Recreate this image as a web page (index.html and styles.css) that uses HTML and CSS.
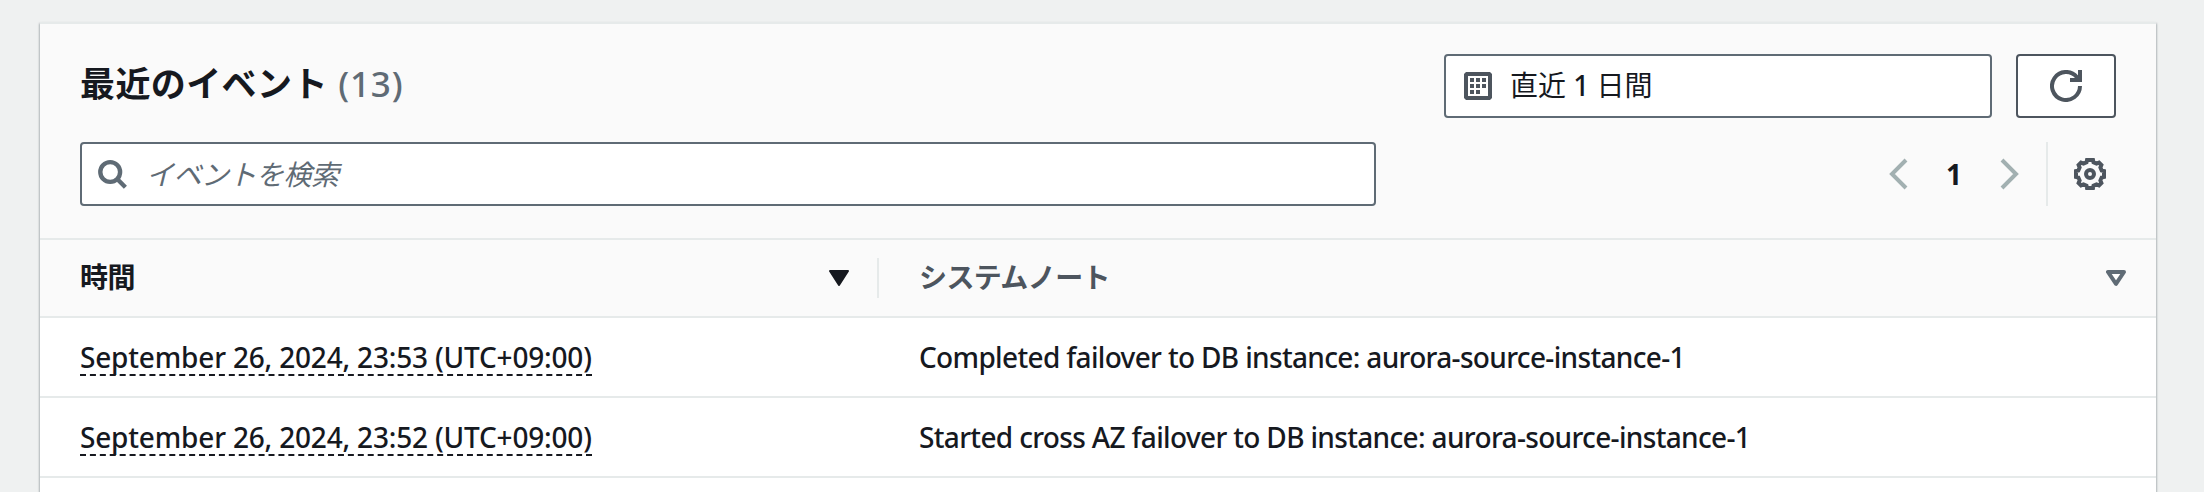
FILE: index.html
```html
<!DOCTYPE html>
<html lang="ja">
<head>
<meta charset="utf-8">
<title>最近のイベント</title>
<link rel="stylesheet" href="styles.css">
</head>
<body>
<main class="card">
  <header class="header">
    <div class="title-row">
      <h2 class="title">最近のイベント <span class="count">(13)</span></h2>
      <div class="range">
        <svg class="calendar" viewBox="0 0 28 28" width="28" height="28"><path fill="#4d555e" fill-rule="evenodd" d="M2 0H26L28 2V26L26 28H2L0 26V2ZM4 4V24H24V4Z"/><path fill="#4d555e" d="M6 6h4v4H6zM12 6h4v4h-4zM18 6h4v4h-4zM6 12h4v4H6zM12 12h4v4h-4zM18 12h4v4h-4zM6 18h4v4H6zM12 18h4v4h-4z"/></svg>
        <span class="range-text">直近 <span class="number">1</span> 日間</span>
      </div>
      <button class="refresh" aria-label="更新"><svg viewBox="0 0 32 32" width="32" height="32" fill="none" stroke="#4d555e" stroke-width="4"><path d="M30 16A14 14 0 1 1 27 7.3L28.6 9.6"/><path d="M30 0V10H20"/></svg></button>
    </div>
    <div class="filter-row">
      <div class="search">
        <svg viewBox="0 0 32 32" width="32" height="32" fill="none" stroke="#5f6b75" stroke-width="4.4"><circle cx="14.2" cy="14" r="9.9"/><path d="M21.2 21L29.4 29.2"/></svg>
        <span class="placeholder">イベントを検索</span>
      </div>
      <nav class="pager">
        <svg class="prev" viewBox="0 0 20 32" width="20" height="32" fill="none" stroke="#a2b0b1" stroke-width="4"><path d="M18 2L4 16L18 30"/></svg>
        <span class="page">1</span>
        <svg class="next" viewBox="0 0 20 32" width="20" height="32" fill="none" stroke="#a2b0b1" stroke-width="4"><path d="M2 2L16 16L2 30"/></svg>
        <span class="rule"></span>
        <svg class="gear" viewBox="0 0 32 32" width="32" height="32" fill="none" stroke="#4d555e" stroke-width="4"><path d="M13 2H19L19.500 4.300L22.500 5.600L25 4.600L27.400 7L26.400 9.500L27.700 12.500L30 13V19L27.700 19.500L26.400 22.500L27.400 25L25 27.400L22.500 26.400L19.500 27.700L19 30H13L12.500 27.700L9.500 26.400L7 27.400L4.600 25L5.600 22.500L4.300 19.500L2 19V13L4.300 12.500L5.600 9.500L4.600 7L7 4.600L9.500 5.600L12.500 4.300Z"/><circle cx="16" cy="16" r="4"/></svg>
      </nav>
    </div>
  </header>
  <div class="row head">
    <div class="cell time"><span class="label">時間</span><svg viewBox="0 0 20 16" width="20" height="16"><path fill="#16191f" stroke="#16191f" stroke-width="2" stroke-linejoin="round" d="M1 1H19L10 15Z"/></svg></div>
    <div class="cell note"><span class="label">システムノート</span><svg viewBox="0 0 20 16" width="20" height="16"><path fill="#fff" stroke="#5f6b75" stroke-width="4" stroke-linejoin="round" d="M2 2H18L10 13.800Z"/></svg></div>
  </div>
  <div class="row">
    <div class="cell"><span class="date">September 26, 2024, 23:53 (UTC+09:00)</span></div>
    <div class="cell note"><span class="message">Completed failover to DB instance: aurora-source-instance-1</span></div>
  </div>
  <div class="row">
    <div class="cell"><span class="date">September 26, 2024, 23:52 (UTC+09:00)</span></div>
    <div class="cell note"><span class="message">Started cross AZ failover to DB instance: aurora-source-instance-1</span></div>
  </div>
</main>
</body>
</html>
```
FILE: styles.css
```css
* { box-sizing: border-box; }
body {
  margin: 0;
  height: 492px;
  padding: 22px 48px 0 40px;
  overflow: hidden;
  background: #eff1f1;
  color: #16191f;
  font-family: "Noto Sans", "Noto Sans CJK JP", sans-serif;
  font-size: 28px;
  line-height: 44px;
}
svg { display: block; flex: none; }
.card {
  height: 470px;
  background: #fff;
  border-top: 2px solid #e6eaea;
  box-shadow: 0 2px 2px rgba(0, 28, 36, .3), 1px 1px 2px rgba(0, 28, 36, .15), -1px 1px 2px rgba(0, 28, 36, .15);
}
.header {
  height: 216px;
  padding: 30px 40px 0;
  background: #fafafa;
  border-bottom: 2px solid #e6eaea;
}
.title-row, .filter-row { display: flex; height: 64px; }
.filter-row { margin-top: 24px; justify-content: space-between; }
.title {
  flex: 1;
  margin: 0;
  font-size: 35px;
  font-weight: 700;
  letter-spacing: .4px;
  line-height: 60px;
  white-space: nowrap;
}
.count {
  margin-left: 1px;
  color: #5f6b75;
  font-weight: 500;
  letter-spacing: .8px;
}
.range, .search {
  display: flex;
  align-items: center;
  background: #fff;
  border: 2px solid #5f6b75;
  border-radius: 4px;
}
.range { width: 548px; padding-left: 18px; }
.range-text { margin: 0 0 2px 18px; white-space: nowrap; }
.number { font-weight: 500; }
.refresh {
  display: flex;
  align-items: center;
  justify-content: center;
  width: 100px;
  margin-left: 24px;
  padding: 0;
  background: #fff;
  border: 2px solid #4d555e;
  border-radius: 4px;
}
.search { width: 1296px; padding-left: 14px; }
.placeholder {
  margin-left: 18px;
  color: #5f6b75;
  font-style: italic;
  letter-spacing: -.5px;
}
.pager { display: flex; align-items: center; }
.page { width: 92px; text-align: center; font-weight: 700; }
.rule { width: 2px; height: 64px; margin: 0 26px; background: #e6eaea; }
.gear { margin-right: 10px; }
.row {
  display: grid;
  grid-template-columns: 839px 1fr;
  height: 80px;
  border-bottom: 2px solid #e6eaea;
}
.head { height: 78px; background: #fafafa; font-weight: 700; }
.cell {
  display: flex;
  align-items: center;
  justify-content: space-between;
  padding-left: 40px;
  white-space: nowrap;
}
.time {
  height: 40px;
  margin-top: 18px;
  padding-right: 28px;
  border-right: 2px solid #e6eaea;
}
.note { padding-left: 40px; }
.head .note { padding-right: 30px; color: #4d555e; }
.label { margin-bottom: 2px; letter-spacing: -.6px; }
.date, .message { font-weight: 500; }
.date {
  margin-top: 2px;
  line-height: 34px;
  letter-spacing: -.18px;
  border-bottom: 2px dashed #16191f;
}
.message { letter-spacing: -.66px; }
```
